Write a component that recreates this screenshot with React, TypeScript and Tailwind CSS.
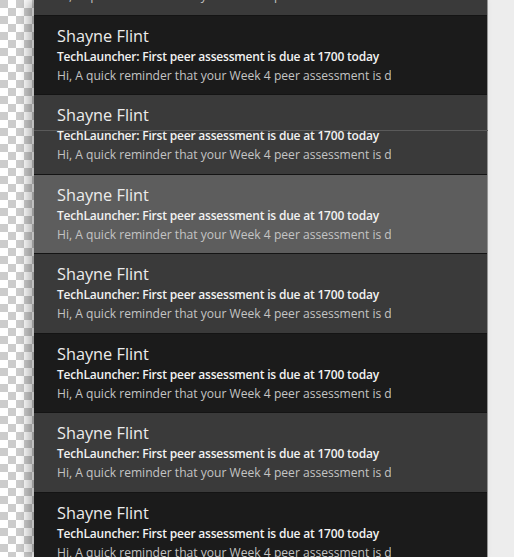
import React from "react";

const rows = ["gray", "black", "gray", "hl", "gray", "black", "gray", "black"];

function Row({ kind, divider }: { kind: string; divider?: boolean }) {
  const bg =
    kind === "black" ? "bg-[#1b1b1b]" : kind === "hl" ? "bg-[#5d5d5d]" : "bg-[#3a3a3a]";
  return (
    <div className={`relative h-[79.5px] shrink-0 ${bg} border-t border-[#141414]`}>
      {divider && <div className="absolute left-0 right-[-1px] top-[35px] h-px bg-[#5a5a5a]" />}
      <div className="pl-[23px] pt-[8px] w-[357px] overflow-hidden whitespace-nowrap">
        <div className="text-[16.3px] leading-[24px] text-[#ececec] font-normal">Shayne Flint</div>
        <div className="text-[12px] leading-[19px] tracking-[-0.2px] text-[#f2f2f2] font-semibold mt-[-1px]">
          TechLauncher: First peer assessment is due at 1700 today
        </div>
        <div className="text-[12.1px] leading-[19px] text-[#c4c4c4]">
          Hi, A quick reminder that your Week 4 peer assessment is due today
        </div>
      </div>
    </div>
  );
}

export default function App() {
  return (
    <div
      className="w-[514px] h-[557px] flex overflow-hidden bg-[#ededed]"
      style={{ fontFamily: '"Open Sans", "Noto Sans", sans-serif' }}
    >
      <div className="w-[34px] shrink-0 h-full bg-[repeating-conic-gradient(#ffffff_0_25%,#cccccc_0_50%)] bg-[length:16px_16px]" />
      <div className="w-[453px] shrink-0 h-full flex flex-col shadow-[-6px_0_10px_rgba(0,0,0,0.3)] relative">
        <div className="-mt-[65px] flex flex-col">
          {rows.map((k, i) => (
            <Row key={i} kind={k} divider={i === 2} />
          ))}
        </div>
      </div>
      <div className="w-px shrink-0 h-full bg-[#9a9a9a]" />
      <div className="flex-1 h-full bg-[#ededed]" />
    </div>
  );
}
